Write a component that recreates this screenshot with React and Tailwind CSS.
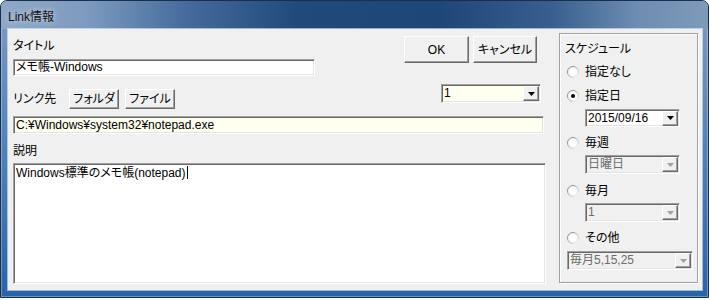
import React from 'react';

const sunken =
  'border border-t-[#a0a0a0] border-l-[#a0a0a0] border-r-white border-b-white shadow-[inset_1px_1px_0_#696969,inset_-1px_-1px_0_#e3e3e3]';
const raised =
  'border border-t-white border-l-white border-r-[#696969] border-b-[#696969] shadow-[inset_-1px_-1px_0_#a0a0a0] bg-[#f0f0f0]';

function Arrow({ disabled }) {
  return (
    <div className={`${raised} m-[1px] flex h-[15px] w-[16px] shrink-0 items-center justify-center`}>
      <svg width="7" height="4" viewBox="0 0 7 4">
        <polygon points="0,0 7,0 3.5,4" fill={disabled ? '#a0a0a0' : '#000'} />
      </svg>
    </div>
  );
}

function Combo({ value, className = '', disabled }) {
  return (
    <div className={`${sunken} flex items-center ${className}`}>
      <span className={`flex-1 truncate pl-[2px] leading-[15px] ${disabled ? 'text-[#6d6d6d]' : ''}`}>{value}</span>
      <Arrow disabled={disabled} />
    </div>
  );
}

function Radio({ checked, label, className = '' }) {
  return (
    <div className={`flex h-[20px] items-center ${className}`}>
      <svg width="12" height="12" viewBox="0 0 12 12" className="ml-[7px] shrink-0">
        <defs>
          <linearGradient id={`rg-${label}`} x1="0" y1="0" x2="1" y2="1">
            <stop offset="0" stopColor="#7a7a7a" />
            <stop offset="0.55" stopColor="#b5b5b5" />
            <stop offset="1" stopColor="#ffffff" />
          </linearGradient>
        </defs>
        <circle cx="6" cy="6" r="5.5" fill="#fff" stroke={`url(#rg-${label})`} />
        <circle cx="6" cy="6" r="4.5" fill="none" stroke="#e6e6e6" strokeWidth="0.8" />
        {checked && <circle cx="6" cy="6" r="2" fill="#000" />}
      </svg>
      <span className="ml-[6px] leading-[16px]">{label}</span>
    </div>
  );
}

function Button({ children, className = '' }) {
  return (
    <div className={`${raised} flex items-center justify-center leading-[14px] ${className}`}>{children}</div>
  );
}

export default function App() {
  return (
    <div className="h-[300px] w-[710px] bg-white font-['Liberation_Sans','Noto_Sans_CJK_JP',sans-serif] text-[12px] text-black [font-feature-settings:'palt']">
      <div className="flex h-[298px] w-[709px] flex-col rounded-t-[7px] border border-[#1b2f4d] bg-[linear-gradient(to_bottom,#7f9cc0,#4d7eb8_55%,#2a64a8)] shadow-[inset_0_0_0_1px_rgba(255,255,255,0.3)]">
        <div className="h-[28px] rounded-t-[6px] bg-[linear-gradient(90deg,#8ea9c8_0%,#7d9bbf_12%,#42699a_27%,#214a7a_42%,#1e4676_62%,#385f8e_78%,#6e8db1_90%,#7e9abb_100%)] pl-[7px] pt-[7px]">
          <span className="leading-[16px] text-[#111] [text-shadow:0_0_6px_rgba(255,255,255,0.8)]">Link情報</span>
        </div>
        <div className="ml-[7px] mr-[6px] flex h-[261px] bg-[#f0f0f0] pl-[5px] shadow-[0_0_0_1px_rgba(255,255,255,0.55)]">
          <div className="flex w-[533px] flex-col">
            <div className="flex">
              <div className="flex w-[302px] flex-col">
                <div className="mt-[9px] h-[16px] leading-[16px]">タイトル</div>
                <div className={`${sunken} mt-[5px] h-[17px] w-[302px] bg-white pl-[2px] leading-[15px]`}>メモ帳-Windows</div>
              </div>
              <div className="ml-[89px] mt-[7px] flex gap-[4px]">
                <Button className="h-[27px] w-[65px]">OK</Button>
                <Button className="h-[27px] w-[64px]">キャンセル</Button>
              </div>
            </div>
            <div className="mt-[8px] flex h-[25px] items-start">
              <div className="mt-[5px] flex items-center">
                <div className="w-[56px] leading-[16px]">リンク先</div>
                <Button className="h-[20px] w-[50px]">フォルダ</Button>
                <Button className="ml-[6px] h-[20px] w-[50px]">ファイル</Button>
              </div>
              <Combo value="1" className="ml-auto mr-[5px] h-[19px] w-[100px] bg-[#fffff0]" />
            </div>
            <div className={`${sunken} mt-[7px] h-[18px] w-[531px] bg-[#fffff0] pl-[2px] leading-[16px]`}>
              C:¥Windows¥system32¥notepad.exe
            </div>
            <div className="mt-[9px] h-[16px] leading-[16px]">説明</div>
            <div className={`${sunken} mt-[4px] h-[121px] w-[533px] bg-white pl-[2px] pt-[2px] leading-[15px]`}>
              Windows標準のメモ帳(notepad)
              <span className="ml-px inline-block h-[13px] w-px bg-black align-[-2px]" />
            </div>
          </div>
          <div className="ml-[13px] mt-[4px] flex h-[250px] w-[139px] flex-col border border-[#a0a0a0] shadow-[1px_1px_0_#fff,inset_1px_1px_0_#fff]">
            <div className="ml-[5px] mt-[7px] h-[16px] leading-[16px]">スケジュール</div>
            <Radio label="指定なし" className="mt-[5px]" />
            <Radio label="指定日" checked className="mt-[4px]" />
            <Combo value="2015/09/16" className="ml-[25px] mt-[3px] h-[18px] w-[95px] bg-white" />
            <Radio label="毎週" className="mt-[6px]" />
            <Combo value="日曜日" disabled className="ml-[25px] mt-[2px] h-[19px] w-[95px] bg-[#f0f0f0]" />
            <Radio label="毎月" className="mt-[7px]" />
            <Combo value="1" disabled className="ml-[25px] mt-[2px] h-[19px] w-[95px] bg-[#f0f0f0]" />
            <Radio label="その他" className="mt-[6px]" />
            <Combo value="毎月5,15,25" disabled className="ml-[7px] mt-[3px] h-[19px] w-[126px] bg-[#f0f0f0]" />
          </div>
        </div>
      </div>
    </div>
  );
}
